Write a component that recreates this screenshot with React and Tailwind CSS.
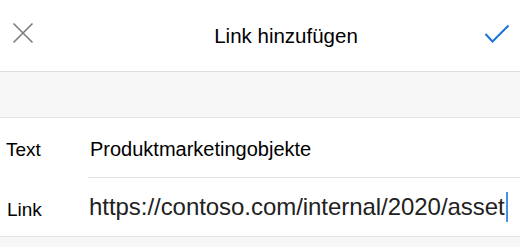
const font = { fontFamily: '"Liberation Sans", Arial, sans-serif' };

const App = () => {
  return (
    <div className="w-[520px] h-[247px] bg-[#f7f7f7] overflow-hidden" style={font}>
      {/* Header */}
      <div className="h-[72px] bg-white border-b border-[#dedede] flex items-center">
        <button className="w-[46px] h-[24px] flex items-center justify-center mb-[6px]">
          <svg width="22" height="22" viewBox="0 0 22 22">
            <path d="M1.5 1.5 L20.5 20.5 M20.5 1.5 L1.5 20.5" stroke="#7b7b7b" strokeWidth="1.6" fill="none" />
          </svg>
        </button>
        <div className="flex-1 text-center pl-[52px] text-[20.5px] leading-[24px] text-black">Link hinzufügen</div>
        <button className="w-[46px] h-[24px] flex items-center justify-center mb-[4px]">
          <svg width="26" height="20" viewBox="0 0 26 20">
            <path d="M1.5 10 L8.5 17.5 L24.5 1.5" stroke="#1a73d9" strokeWidth="2" fill="none" />
          </svg>
        </button>
      </div>

      {/* Gray spacer */}
      <div className="h-[46px] border-b border-[#e3e3e3]" />

      {/* Fields */}
      <div className="bg-white border-b border-[#e3e3e3]">
        <div className="flex h-[60px]">
          <div className="w-[88px] pl-[6px] pt-[21px] text-[19px] leading-[22px] text-black">Text</div>
          <div className="flex-1 pt-[20px] pl-[2px] text-[20px] leading-[23px] text-black border-b border-[#e3e3e3]">
            Produktmarketingobjekte
          </div>
        </div>
        <div className="flex h-[58px]">
          <div className="w-[88px] pl-[7px] pt-[21px] text-[19px] leading-[22px] text-black">Link</div>
          <div className="flex-1 pt-[15px] pl-[1px] flex items-start">
            <span className="text-[24px] leading-[28px] text-[#222222] tracking-[-0.05px]">
              https://contoso.com/internal/2020/asset
            </span>
            <span className="w-[2px] h-[30px] bg-[#4a8fe0] mt-[-1px] ml-[1px]" />
          </div>
        </div>
      </div>
    </div>
  );
};

export default App;
